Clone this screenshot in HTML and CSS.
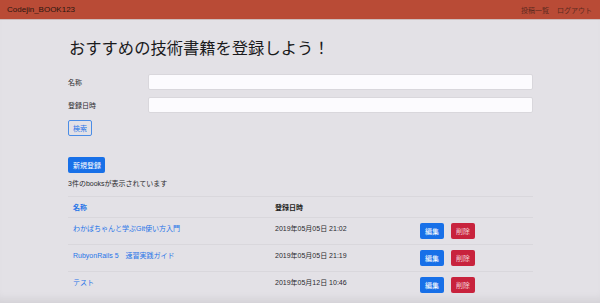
FILE: index.html
```html
<!DOCTYPE html>
<html lang="ja">
<head>
    <meta charset="UTF-8">
    <title>Codejin_BOOK123</title>
    <link rel="stylesheet" href="styles.css">
</head>
<body>
    <div class="navbar">
        <div class="brand">Codejin_BOOK123</div>
        <div class="nav-links">
            <a href="#">投稿一覧</a>
            <a href="#">ログアウト</a>
        </div>
    </div>

    <div class="container">
        <h1>おすすめの技術書籍を登録しよう！</h1>

        <form class="search-form">
            <div class="form-row">
                <label>名称</label>
                <input type="text">
            </div>
            <div class="form-row">
                <label>登録日時</label>
                <input type="text">
            </div>
            <button type="button" class="btn btn-outline">検索</button>
        </form>

        <button class="btn btn-primary new-btn">新規登録</button>
        <p class="count">3件のbooksが表示されています</p>

        <table class="books">
            <thead>
                <tr>
                    <th class="col-name"><a href="#">名称</a></th>
                    <th class="col-date">登録日時</th>
                    <th></th>
                </tr>
            </thead>
            <tbody>
                <tr>
                    <td><a href="#">わかばちゃんと学ぶGit使い方入門</a></td>
                    <td>2019年05月05日 21:02</td>
                    <td><div class="actions"><button class="btn btn-primary">編集</button><button class="btn btn-danger">削除</button></div></td>
                </tr>
                <tr>
                    <td><a href="#">RubyonRails 5　速習実践ガイド</a></td>
                    <td>2019年05月05日 21:19</td>
                    <td><div class="actions"><button class="btn btn-primary">編集</button><button class="btn btn-danger">削除</button></div></td>
                </tr>
                <tr>
                    <td><a href="#">テスト</a></td>
                    <td>2019年05月12日 10:46</td>
                    <td><div class="actions"><button class="btn btn-primary">編集</button><button class="btn btn-danger">削除</button></div></td>
                </tr>
            </tbody>
        </table>
    </div>
</body>
</html>
```

FILE: styles.css
```css
* { margin: 0; padding: 0; box-sizing: border-box; }

body {
    font-family: "Liberation Sans", "Noto Sans CJK JP", sans-serif;
    background: #e3e1e6;
    color: #2a2a2e;
    height: 303px;
    overflow: hidden;
    font-size: 7px;
    box-shadow: inset 0 -9px 8px -5px rgba(0, 0, 0, 0.07);
}

a {
    color: #1f74e8;
    text-decoration: none;
}

.navbar {
    height: 19px;
    background: #b94b36;
    padding: 0 8px 0 7px;
    display: flex;
    justify-content: space-between;
    align-items: center;
    box-shadow: 0 1px 0 #cdbdbd;
}

.brand {
    font-size: 8px;
    color: #2b1610;
}

.nav-links {
    display: flex;
    gap: 8px;
}

.nav-links a {
    color: #5a2a20;
    font-size: 7px;
}

.container {
    width: 465px;
    margin-left: 68px;
}

h1 {
    font-size: 16.3px;
    font-weight: normal;
    color: #1a1a1c;
    margin-top: 20px;
    line-height: 19px;
    margin-left: 1px;
}

.search-form {
    margin-top: 16px;
}

.form-row {
    display: flex;
    align-items: center;
    margin-bottom: 7px;
}

.form-row label {
    width: 80px;
}

.form-row input {
    flex: 1;
    height: 16px;
    background: #fcfbfe;
    border: 1px solid #d9d7dc;
    border-radius: 2px;
}

.btn {
    height: 16px;
    padding: 0 4px;
    font-size: 7px;
    font-family: inherit;
    white-space: nowrap;
    border-radius: 2px;
    border: 1px solid transparent;
    cursor: pointer;
}

.btn-outline {
    background: transparent;
    color: #1f74e8;
    border-color: #4b8de6;
}

.btn-primary {
    background: #1870e8;
    color: #fff;
}

.btn-danger {
    background: #c8233d;
    color: #f4d4d8;
}

.new-btn {
    margin-top: 21px;
    width: 37px;
}

.count {
    margin-top: 6px;
    line-height: 9px;
}

.books {
    width: 100%;
    margin-top: 8px;
    border-collapse: collapse;
}

.books th,
.books td {
    text-align: left;
    padding: 0 5px;
    border-top: 1px solid #d9d7dc;
}

.books th {
    height: 21px;
    font-weight: bold;
    color: #1e1e22;
    vertical-align: middle;
    border-bottom: 1px solid #d9d7dc;
}

.books td {
    vertical-align: top;
    padding-top: 5px;
    padding-bottom: 5px;
    line-height: 11px;
}

.col-name { width: 202px; }
.col-date { width: 145px; }

.actions {
    display: flex;
    gap: 7px;
}

.actions .btn {
    width: 24px;
    padding: 0;
}
```
